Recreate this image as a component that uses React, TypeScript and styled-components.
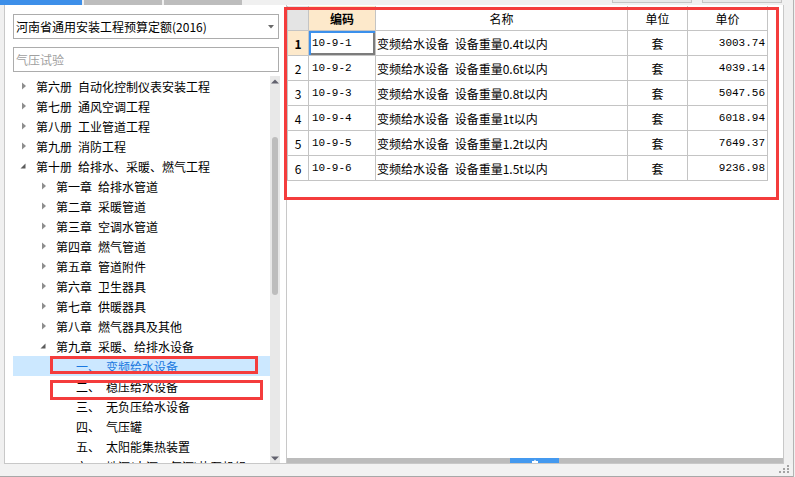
import React from "react";
import styled, { createGlobalStyle } from "styled-components";

const GlobalStyle = createGlobalStyle`
  html, body {
    margin: 0;
    padding: 0;
    background: #f0f0f0;
  }
  body {
    font-family: "Noto Sans CJK SC", "Liberation Sans", sans-serif;
    font-size: 12px;
    color: #000;
  }
  * {
    box-sizing: border-box;
  }
`;

const Window = styled.div`
  position: relative;
  width: 794px;
  height: 477px;
  display: flex;
  flex-direction: column;
  background: #f0f0f0;
  border-right: 1px solid #b4b4b4;
  overflow: hidden;
`;

const TopStrip = styled.div`
  height: 5px;
  flex-shrink: 0;
  display: flex;
`;

const StripTab = styled.div<{ $active?: boolean }>`
  width: ${(p) => (p.$active ? 82 : 78)}px;
  margin-right: 2px;
  background: ${(p) => (p.$active ? "#3d8fe9" : "#bdbdbd")};
`;

const GhostButton = styled.div<{ $first?: boolean }>`
  width: 80px;
  height: 3px;
  margin-left: ${(p) => (p.$first ? "auto" : "10px")};
  background: #e8e8e8;
  border: 1px solid #c4c4c4;
  border-top: none;
`;

const Main = styled.div`
  height: 459px;
  flex-shrink: 0;
  display: flex;
  padding-left: 4px;
`;

const LeftPane = styled.div`
  width: 282px;
  display: flex;
  flex-direction: column;
  padding: 9px 0 0 8px;
  background: #fff;
  border-left: 1px solid #c8c8c8;
  border-bottom: 1px solid #c8c8c8;
`;

const Field = styled.div`
  width: 266px;
  height: 25px;
  flex-shrink: 0;
  display: flex;
  align-items: center;
  padding-left: 2px;
  background: #fff;
  border: 1px solid #acacac;
  font-size: 12px;
`;

const SelectField = styled(Field)`
  color: #000;
`;

const SelectArrow = styled.svg`
  margin-left: auto;
  margin-right: 4px;
`;

const SearchField = styled(Field)`
  margin-top: 8px;
  color: #a0a0a0;
`;

const Tree = styled.div`
  margin-top: 4px;
  width: 267px;
  flex: 1;
  display: flex;
  overflow: hidden;
`;

const TreeList = styled.div`
  flex: 1;
  overflow: hidden;
`;

const TreeRow = styled.div<{ $level: number; $selected?: boolean }>`
  height: 20px;
  display: flex;
  align-items: center;
  padding-left: ${(p) => 9 + p.$level * 20}px;
  white-space: nowrap;
  background: ${(p) => (p.$selected ? "#cce8ff" : "transparent")};
  color: ${(p) => (p.$selected ? "#1a78e0" : "#000")};
`;

const Toggle = styled.span`
  width: 14px;
  flex-shrink: 0;
  display: flex;
  align-items: center;
`;

const Prefix = styled.span`
  margin-right: 6px;
`;

const VScroll = styled.div`
  width: 10px;
  display: flex;
  flex-direction: column;
  align-items: center;
  background: #e8e8e8;
`;

const ScrollArrow = styled.div<{ $bottom?: boolean }>`
  height: 10px;
  width: 100%;
  display: flex;
  justify-content: center;
  align-items: ${(p) => (p.$bottom ? "flex-start" : "center")};
  padding-top: ${(p) => (p.$bottom ? "3px" : "0")};
  margin-top: ${(p) => (p.$bottom ? "auto" : "0")};
`;

const Thumb = styled.div`
  margin-top: 51px;
  width: 6px;
  height: 158px;
  border-radius: 3px;
  background: #bdbdbd;
`;

const RightPane = styled.div`
  width: 498px;
  display: flex;
  flex-direction: column;
  background: #fff;
  border-left: 1px solid #c8c8c8;
  border-right: 1px solid #c8c8c8;
  border-bottom: 1px solid #c8c8c8;
`;

const TableArea = styled.div`
  flex: 1;
  padding-top: 1px;
`;

const Grid = styled.div`
  display: grid;
  width: fit-content;
  grid-template-columns: 20px 66px 251px 59px 79px;
  grid-auto-rows: 24px;
  gap: 1px;
  padding: 0 1px 1px 1px;
  background: #c4c4c4;
`;

const Cell = styled.div<{
  $align?: "left" | "center" | "right";
  $bg?: string;
  $bold?: boolean;
  $mono?: boolean;
  $focused?: boolean;
}>`
  display: flex;
  align-items: center;
  justify-content: ${(p) =>
    p.$align === "right" ? "flex-end" : p.$align === "center" ? "center" : "flex-start"};
  padding: 0 ${(p) => (p.$align === "right" ? "2px" : "0")} 0
    ${(p) => (p.$align === "left" ? (p.$mono ? "3px" : "1px") : "0")};
  background: ${(p) => p.$bg || "#fff"};
  font-weight: ${(p) => (p.$bold ? 700 : 400)};
  font-family: ${(p) =>
    p.$mono
      ? '"Liberation Mono", "Noto Sans CJK SC", monospace'
      : '"Noto Sans CJK SC", "Liberation Sans", sans-serif'};
  font-size: ${(p) => (p.$mono ? "11px" : "12px")};
  word-spacing: 3px;
  white-space: nowrap;
  box-shadow: ${(p) =>
    p.$focused ? "inset 2px 2px 0 #3b90ec, inset -2px -2px 0 #7c7c7c" : "none"};
`;

const HScroll = styled.div`
  height: 5px;
  flex-shrink: 0;
  display: flex;
  background: #bcbcbc;
`;

const HThumb = styled.div`
  margin-left: 223px;
  width: 49px;
  display: flex;
  justify-content: center;
  align-items: center;
  background: #4499ef;
`;

const Gutter = styled.div`
  flex: 1;
`;

const StatusBar = styled.div`
  height: 13px;
  flex-shrink: 0;
  display: flex;
  justify-content: flex-end;
  align-items: flex-start;
  padding-right: 2px;
  background: #f2f2f2;
  border-bottom: 1px solid #a8a8a8;
`;

const Mark = styled.div<{ $x: number; $y: number; $w: number; $h: number }>`
  position: absolute;
  left: ${(p) => p.$x}px;
  top: ${(p) => p.$y}px;
  width: ${(p) => p.$w}px;
  height: ${(p) => p.$h}px;
  border: 3px solid #f43c3c;
  pointer-events: none;
`;

type Node = {
  level: number;
  toggle: "closed" | "open" | "none";
  prefix: string;
  label: string;
  selected?: boolean;
};

const tree: Node[] = [
  { level: 0, toggle: "closed", prefix: "第六册", label: "自动化控制仪表安装工程" },
  { level: 0, toggle: "closed", prefix: "第七册", label: "通风空调工程" },
  { level: 0, toggle: "closed", prefix: "第八册", label: "工业管道工程" },
  { level: 0, toggle: "closed", prefix: "第九册", label: "消防工程" },
  { level: 0, toggle: "open", prefix: "第十册", label: "给排水、采暖、燃气工程" },
  { level: 1, toggle: "closed", prefix: "第一章", label: "给排水管道" },
  { level: 1, toggle: "closed", prefix: "第二章", label: "采暖管道" },
  { level: 1, toggle: "closed", prefix: "第三章", label: "空调水管道" },
  { level: 1, toggle: "closed", prefix: "第四章", label: "燃气管道" },
  { level: 1, toggle: "closed", prefix: "第五章", label: "管道附件" },
  { level: 1, toggle: "closed", prefix: "第六章", label: "卫生器具" },
  { level: 1, toggle: "closed", prefix: "第七章", label: "供暖器具" },
  { level: 1, toggle: "closed", prefix: "第八章", label: "燃气器具及其他" },
  { level: 1, toggle: "open", prefix: "第九章", label: "采暖、给排水设备" },
  { level: 2, toggle: "none", prefix: "一、", label: "变频给水设备", selected: true },
  { level: 2, toggle: "none", prefix: "二、", label: "稳压给水设备" },
  { level: 2, toggle: "none", prefix: "三、", label: "无负压给水设备" },
  { level: 2, toggle: "none", prefix: "四、", label: "气压罐" },
  { level: 2, toggle: "none", prefix: "五、", label: "太阳能集热装置" },
  { level: 2, toggle: "none", prefix: "六、", label: "地源(水源、气源)热泵机组" },
];

const rows = [
  { code: "10-9-1", name: "变频给水设备 设备重量0.4t以内", unit: "套", price: "3003.74" },
  { code: "10-9-2", name: "变频给水设备 设备重量0.6t以内", unit: "套", price: "4039.14" },
  { code: "10-9-3", name: "变频给水设备 设备重量0.8t以内", unit: "套", price: "5047.56" },
  { code: "10-9-4", name: "变频给水设备 设备重量1t以内", unit: "套", price: "6018.94" },
  { code: "10-9-5", name: "变频给水设备 设备重量1.2t以内", unit: "套", price: "7649.37" },
  { code: "10-9-6", name: "变频给水设备 设备重量1.5t以内", unit: "套", price: "9236.98" },
];

const PEACH = "#fde9cb";

const ToggleIcon = ({ kind }: { kind: Node["toggle"] }) => {
  if (kind === "closed")
    return (
      <svg width="5" height="8" viewBox="0 0 5 8">
        <polygon points="0,0.5 4,4 0,7.5" fill="#8e8e8e" />
      </svg>
    );
  if (kind === "open")
    return (
      <svg width="6" height="6" viewBox="0 0 6 6" style={{ marginLeft: -2 }}>
        <polygon points="5.5,0.5 5.5,5.5 0.5,5.5" fill="#5c5c5c" />
      </svg>
    );
  return null;
};

export default function App() {
  return (
    <>
      <GlobalStyle />
      <Window>
        <TopStrip>
          <StripTab $active />
          <StripTab />
          <StripTab />
          <GhostButton $first />
          <GhostButton style={{ marginRight: 11 }} />
        </TopStrip>

        <Main>
          <LeftPane>
            <SelectField>
              河南省通用安装工程预算定额(2016)
              <SelectArrow width="6" height="4" viewBox="0 0 6 4">
                <polygon points="0,0 6,0 3,3.5" fill="#6a6a6a" />
              </SelectArrow>
            </SelectField>
            <SearchField>气压试验</SearchField>
            <Tree>
              <TreeList>
                {tree.map((n) => (
                  <TreeRow key={n.prefix + n.label} $level={n.level} $selected={n.selected}>
                    <Toggle>
                      <ToggleIcon kind={n.toggle} />
                    </Toggle>
                    <Prefix>{n.prefix}</Prefix>
                    {n.label}
                  </TreeRow>
                ))}
              </TreeList>
              <VScroll>
                <ScrollArrow>
                  <svg width="8" height="5" viewBox="0 0 8 5">
                    <polygon points="0,4.5 4,0.5 8,4.5" fill="#62626e" />
                  </svg>
                </ScrollArrow>
                <Thumb />
                <ScrollArrow $bottom>
                  <svg width="8" height="5" viewBox="0 0 8 5">
                    <polygon points="0,0.5 8,0.5 4,4.5" fill="#62626e" />
                  </svg>
                </ScrollArrow>
              </VScroll>
            </Tree>
          </LeftPane>

          <RightPane>
            <TableArea>
              <Grid>
                <Cell $bg="#e4e4e4" />
                <Cell $align="center" $bg={PEACH} $bold>
                  编码
                </Cell>
                <Cell $align="center">名称</Cell>
                <Cell $align="center">单位</Cell>
                <Cell $align="center">单价</Cell>
                {rows.map((r, i) => (
                  <React.Fragment key={r.code}>
                    <Cell $align="center" $bg={i === 0 ? PEACH : undefined} $bold={i === 0}>
                      {i + 1}
                    </Cell>
                    <Cell $align="left" $mono $focused={i === 0}>
                      {r.code}
                    </Cell>
                    <Cell $align="left">{r.name}</Cell>
                    <Cell $align="center">{r.unit}</Cell>
                    <Cell $align="right" $mono>
                      {r.price}
                    </Cell>
                  </React.Fragment>
                ))}
              </Grid>
            </TableArea>
            <HScroll>
              <HThumb>
                <svg width="6" height="4" viewBox="0 0 6 4">
                  <polygon points="2,2 3,0.5 4,2" fill="#fff" />
                  <rect x="0" y="2" width="6" height="2" fill="#fff" />
                </svg>
              </HThumb>
            </HScroll>
          </RightPane>
          <Gutter />
        </Main>

        <StatusBar>
          <svg width="12" height="10" viewBox="0 0 12 10">
            <rect x="8" y="1" width="2" height="2" fill="#a4a4a4" />
            <rect x="4" y="4" width="2" height="2" fill="#a4a4a4" />
            <rect x="8" y="4" width="2" height="2" fill="#a4a4a4" />
            <rect x="0" y="7" width="2" height="2" fill="#a4a4a4" />
            <rect x="4" y="7" width="2" height="2" fill="#a4a4a4" />
            <rect x="8" y="7" width="2" height="2" fill="#a4a4a4" />
          </svg>
        </StatusBar>

        <Mark $x={284} $y={7} $w={495} $h={193} />
        <Mark $x={50} $y={356} $w={208} $h={18} />
        <Mark $x={50} $y={380} $w={213} $h={20} />
      </Window>
    </>
  );
}
